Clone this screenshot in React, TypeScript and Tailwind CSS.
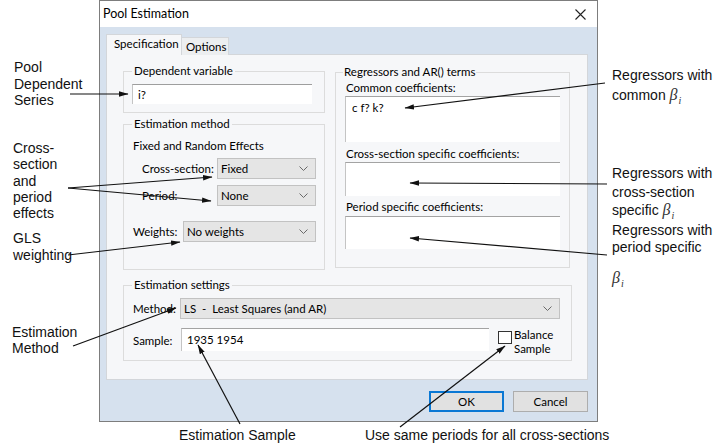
import React from "react";

function Chevron() {
  return (
    <svg width="9" height="5" viewBox="0 0 9 5" className="shrink-0">
      <path d="M0.5 0.5 L4.5 4.5 L8.5 0.5" stroke="#6a6a6a" strokeWidth="1" fill="none" />
    </svg>
  );
}

function Combo({ className, text }: { className: string; text: string }) {
  return (
    <div
      className={
        "flex items-center justify-between h-[21px] bg-[#e5e5e5] border border-[#c2c2c2] pl-[3px] pr-[7px] " +
        className
      }
    >
      <span className="whitespace-pre">{text}</span>
      <Chevron />
    </div>
  );
}

function Beta() {
  return (
    <span className="font-['Liberation_Serif',serif] italic text-[16px] leading-none text-[#333]">
      β<span className="text-[10px] leading-none relative top-[4px] ml-[1px]">i</span>
    </span>
  );
}

function Dialog() {
  return (
    <div className="w-[499px] h-[422px] border border-[#7d7d7d] flex flex-col font-['Lato',sans-serif] text-[11.5px] text-black">
      {/* title bar */}
      <div className="h-[26px] bg-white flex items-center justify-between pl-[3px] pr-[11px]">
        <span className="text-[12.5px]">Pool Estimation</span>
        <svg width="11" height="11" viewBox="0 0 11 11">
          <path d="M0.5 0.5 L10.5 10.5 M10.5 0.5 L0.5 10.5" stroke="#222" strokeWidth="1.1" />
        </svg>
      </div>
      {/* body */}
      <div className="flex-1 bg-[#d6e1ee] pl-[6px] pt-[8px] flex flex-col">
        {/* tabs */}
        <div className="flex items-end h-[20px] relative z-10 -mb-px">
          <div className="w-[76px] h-[21px] bg-[#f6f7f9] border-t border-l border-r border-[#d3d6da] flex items-center pl-[7px] pb-[2px]">
            Specification
          </div>
          <div className="w-[47px] h-[18px] bg-[#eceef0] border-t border-r border-[#d3d6da] flex items-center pl-[4px]">
            Options
          </div>
        </div>
        {/* panel */}
        <div className="w-[482px] h-[326px] bg-[#f6f7f9] border border-[#d3d6da] pt-[8px] pl-[16px] flex flex-col">
          <div className="flex gap-[10px]">
            {/* left column */}
            <div className="w-[202px] flex flex-col gap-[3px]">
              <fieldset className="h-[50px] border border-[#dcdcdc] pl-[8px]">
                <legend className="px-[2px] leading-[16px]">Dependent variable</legend>
                <div className="mt-[5px] w-[180px] h-[20px] bg-white border-t border-l border-t-[#9e9e9e] border-l-[#c4c4c4] flex items-center pl-[5px]">
                  i?
                </div>
              </fieldset>
              <fieldset className="h-[154px] border border-[#dcdcdc] pl-[8px]">
                <legend className="px-[2px] leading-[16px]">Estimation method</legend>
                <div className="mt-[6px] leading-[16px] pl-[1px]">Fixed and Random Effects</div>
                <div className="mt-[4px] flex items-center pl-[10px]">
                  <span className="w-[75px]">Cross-section:</span>
                  <Combo className="w-[99px]" text="Fixed" />
                </div>
                <div className="mt-[6px] flex items-center pl-[10px]">
                  <span className="w-[75px]">Period:</span>
                  <Combo className="w-[99px]" text="None" />
                </div>
                <div className="mt-[15px] flex items-center pl-[1px]">
                  <span className="w-[50px]">Weights:</span>
                  <Combo className="w-[133px]" text="No weights" />
                </div>
              </fieldset>
            </div>
            {/* right column */}
            <div className="w-[235px] pt-[1px]">
              <fieldset className="h-[204px] border border-[#dcdcdc] pl-[9px]">
                <legend className="-ml-[2px] px-[1px] leading-[16px]">Regressors and AR() terms</legend>
                <div className="leading-[16px] pl-[1px]">Common coefficients:</div>
                <div className="w-[215px] h-[46px] bg-white border-t border-l border-t-[#a3a3a3] border-l-[#c4c4c4] pl-[6px] pt-[2px]">
                  c f? k?
                </div>
                <div className="mt-[4px] leading-[16px] pl-[1px]">Cross-section specific coefficients:</div>
                <div className="w-[215px] h-[34px] bg-white border-t border-l border-t-[#a3a3a3] border-l-[#c4c4c4]" />
                <div className="mt-[3px] leading-[16px] pl-[1px]">Period specific coefficients:</div>
                <div className="mt-[1px] w-[215px] h-[33px] bg-white border-t border-l border-t-[#a3a3a3] border-l-[#c4c4c4]" />
              </fieldset>
            </div>
          </div>
          {/* estimation settings */}
          <fieldset className="mt-[7px] w-[449px] h-[84px] border border-[#dcdcdc] pl-[8px]">
            <legend className="px-[2px] leading-[16px]">Estimation settings</legend>
            <div className="mt-[5px] flex items-center">
              <span className="w-[48px] pl-[1px]">Method:</span>
              <Combo className="w-[380px]" text="LS  -  Least Squares (and AR)" />
            </div>
            <div className="mt-[9px] flex items-start">
              <span className="w-[49px] pl-[1px] mt-[4px]">Sample:</span>
              <div className="w-[308px] h-[23px] bg-white border-t border-l border-t-[#a3a3a3] border-l-[#c4c4c4] pl-[5px] flex items-center">
                1935 1954
              </div>
              <div className="ml-[9px] mt-[3px] w-[14px] h-[13px] border border-[#333] bg-white" />
              <div className="ml-[2px] leading-[14px]">
                <div>Balance</div>
                <div>Sample</div>
              </div>
            </div>
          </fieldset>
        </div>
        {/* buttons */}
        <div className="w-[482px] mt-[11px] flex justify-end gap-[9px]">
          <div className="w-[75px] h-[21px] border-2 border-[#0a78d4] bg-[#e1e1e1] flex items-center justify-center">
            OK
          </div>
          <div className="w-[75px] h-[21px] border border-[#adadad] bg-[#e1e1e1] flex items-center justify-center">
            Cancel
          </div>
        </div>
      </div>
    </div>
  );
}

const arrows: [number, number, number, number][] = [
  [70, 94, 128, 94],
  [68, 188, 212, 177],
  [68, 188, 211, 201],
  [68, 255, 180, 242],
  [73, 346, 176, 308],
  [240, 424, 198, 345],
  [400, 427, 505, 346],
  [605, 83, 405, 108],
  [607, 184, 410, 183],
  [607, 255, 410, 238],
];

export default function App() {
  return (
    <div className="relative w-[717px] h-[445px] bg-white overflow-hidden font-['Liberation_Sans',Arial,sans-serif]">
      <div className="pl-[99px]">
        <Dialog />
      </div>

      {/* annotations */}
      <div className="absolute left-[14px] top-[59px] text-[14px] leading-[16.5px] text-[#111]">
        <div>Pool</div>
        <div>Dependent</div>
        <div>Series</div>
      </div>
      <div className="absolute left-[13px] top-[140px] text-[14px] leading-[16.3px] text-[#111]">
        <div>Cross-</div>
        <div>section</div>
        <div>and</div>
        <div>period</div>
        <div>effects</div>
      </div>
      <div className="absolute left-[13px] top-[230px] text-[14px] leading-[17px] text-[#111]">
        <div>GLS</div>
        <div>weighting</div>
      </div>
      <div className="absolute left-[12px] top-[324px] text-[14px] leading-[16px] text-[#111]">
        <div>Estimation</div>
        <div>Method</div>
      </div>
      <div className="absolute left-[179px] top-[427px] text-[14px] leading-[16px] text-[#111]">
        Estimation Sample
      </div>
      <div className="absolute left-[365px] top-[427px] text-[14px] leading-[16px] text-[#111]">
        Use same periods for all cross-sections
      </div>
      <div className="absolute left-[612px] top-[66px] text-[14px] text-[#111]">
        <div className="h-[20px] leading-[18px]">Regressors with</div>
        <div className="h-[18px] leading-[18px]">
          common <Beta />
        </div>
      </div>
      <div className="absolute left-[612px] top-[164px] text-[14px] text-[#111]">
        <div className="h-[18.5px] leading-[18px]">Regressors with</div>
        <div className="h-[18.5px] leading-[18px]">cross-section</div>
        <div className="h-[18.5px] leading-[18px]">
          specific <Beta />
        </div>
      </div>
      <div className="absolute left-[612px] top-[221px] text-[14px] text-[#111]">
        <div className="h-[17px] leading-[18px]">Regressors with</div>
        <div className="h-[17px] leading-[18px]">period specific</div>
        <div className="mt-[14px] h-[18px] leading-[18px]">
          <Beta />
        </div>
      </div>

      <svg className="absolute inset-0 pointer-events-none" width="717" height="445" viewBox="0 0 717 445">
        <defs>
          <marker id="ah" markerUnits="userSpaceOnUse" markerWidth="10" markerHeight="6" refX="9" refY="3" orient="auto">
            <path d="M0,0.3 L9.5,3 L0,5.7 z" fill="#111" />
          </marker>
        </defs>
        {arrows.map(([x1, y1, x2, y2], i) => (
          <line key={i} x1={x1} y1={y1} x2={x2} y2={y2} stroke="#111" strokeWidth="1.2" markerEnd="url(#ah)" />
        ))}
      </svg>
    </div>
  );
}
